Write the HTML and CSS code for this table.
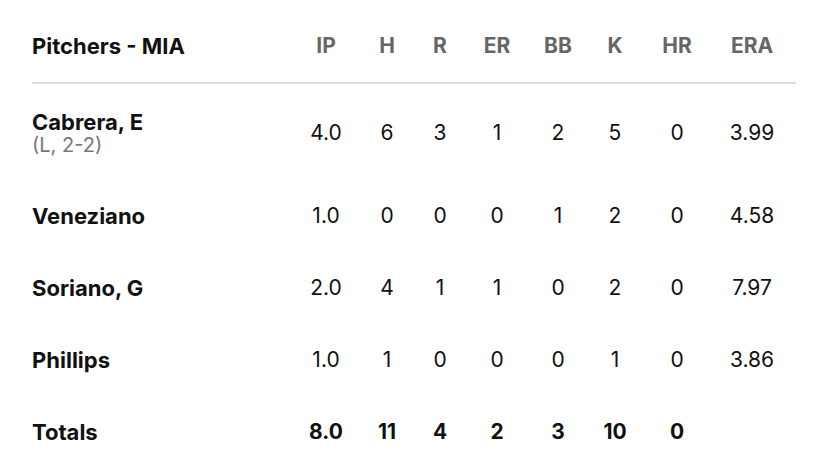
FILE: index.html
```html
<!DOCTYPE html>
<html lang="en">
<head>
    <meta charset="UTF-8">
    <meta name="viewport" content="width=device-width, initial-scale=1.0">
    <title>Box Score - Pitchers</title>
    <link rel="stylesheet" href="styles.css">
</head>
<body>
    <div class="boxscore">
        <!-- Header Row -->
        <div class="row head">
            <div class="name">Pitchers - MIA</div>
            <div>IP</div>
            <div>H</div>
            <div>R</div>
            <div>ER</div>
            <div>BB</div>
            <div>K</div>
            <div>HR</div>
            <div>ERA</div>
        </div>

        <!-- Pitcher Rows -->
        <div class="row">
            <div class="name">Cabrera, E<span class="note">(L, 2-2)</span></div>
            <div>4.0</div>
            <div>6</div>
            <div>3</div>
            <div>1</div>
            <div>2</div>
            <div>5</div>
            <div>0</div>
            <div>3.99</div>
        </div>
        <div class="row">
            <div class="name">Veneziano</div>
            <div>1.0</div>
            <div>0</div>
            <div>0</div>
            <div>0</div>
            <div>1</div>
            <div>2</div>
            <div>0</div>
            <div>4.58</div>
        </div>
        <div class="row">
            <div class="name">Soriano, G</div>
            <div>2.0</div>
            <div>4</div>
            <div>1</div>
            <div>1</div>
            <div>0</div>
            <div>2</div>
            <div>0</div>
            <div>7.97</div>
        </div>
        <div class="row">
            <div class="name">Phillips</div>
            <div>1.0</div>
            <div>1</div>
            <div>0</div>
            <div>0</div>
            <div>0</div>
            <div>1</div>
            <div>0</div>
            <div>3.86</div>
        </div>

        <!-- Totals -->
        <div class="row totals">
            <div class="name">Totals</div>
            <div>8.0</div>
            <div>11</div>
            <div>4</div>
            <div>2</div>
            <div>3</div>
            <div>10</div>
            <div>0</div>
            <div></div>
        </div>
    </div>
</body>
</html>
```

FILE: styles.css
```css
/* General Styles */
body {
    font-family: 'Inter', 'Lato', sans-serif;
    background: #fff;
    margin: 0;
    padding: 0;
    color: #111;
}
.boxscore {
    width: 764px;
    margin-left: 32px;
}

/* Rows */
.row {
    display: grid;
    grid-template-columns: 264px 60px 62px 44px 70px 52px 62px 62px 88px;
    align-items: center;
    padding: 26px 0 22px;
    font-size: 21px;
    line-height: 24px;
}
.row > div {
    text-align: center;
}
.row .name {
    text-align: left;
    font-weight: 700;
    font-size: 22px;
}
.note {
    display: block;
    font-weight: 400;
    color: #777;
    font-size: 20px;
    line-height: 22px;
}

/* Header */
.head {
    padding: 34px 0 24px;
    border-bottom: 2px solid #ddd;
    font-weight: 700;
    color: #666;
}
.head .name {
    color: #111;
}

/* Totals */
.totals {
    font-weight: 700;
}
```
